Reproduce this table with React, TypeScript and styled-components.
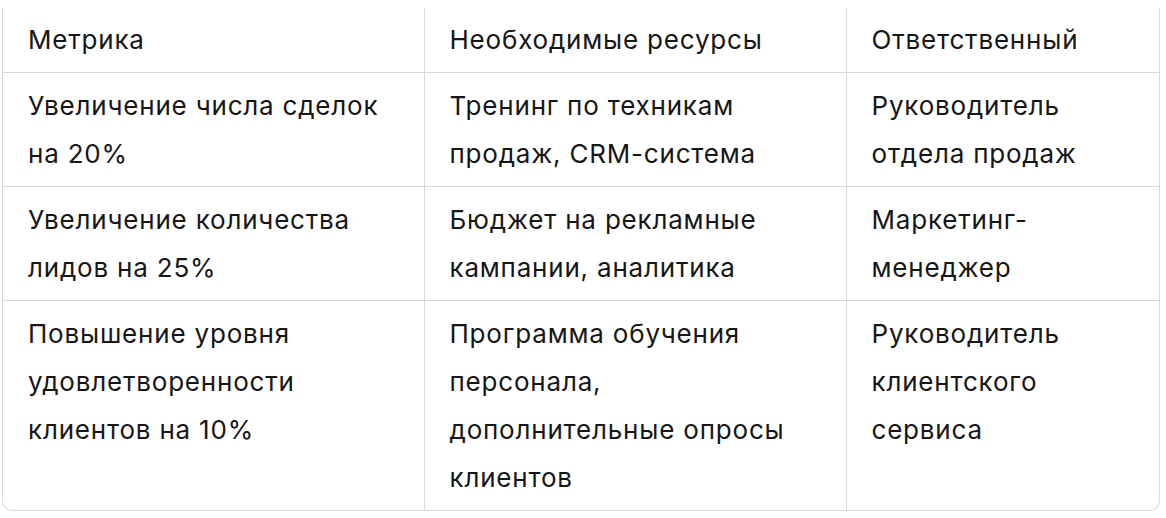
import styled, { createGlobalStyle } from "styled-components"

const GlobalStyle = createGlobalStyle`
  html, body {
    margin: 0;
    padding: 0;
    background: #ffffff;
  }
  body {
    font-family: Inter, "Noto Sans", sans-serif;
    color: #161616;
  }
`

type Row = { metric: string; resources: string; owner: string }

const rows: Row[] = [
    {
        metric: "Увеличение числа сделок на 20%",
        resources: "Тренинг по техникам продаж, CRM-система",
        owner: "Руководитель отдела продаж",
    },
    {
        metric: "Увеличение количества лидов на 25%",
        resources: "Бюджет на рекламные кампании, аналитика",
        owner: "Маркетинг-менеджер",
    },
    {
        metric: "Повышение уровня удовлетворенности клиентов на 10%",
        resources: "Программа обучения персонала, дополнительные опросы клиентов",
        owner: "Руководитель клиентского сервиса",
    },
]

const App = () => {
    return (
        <Page>
            <GlobalStyle />
            <Frame>
                <Table>
                    <colgroup>
                        <col style={{ width: 421 }} />
                        <col style={{ width: 422 }} />
                        <col />
                    </colgroup>
                    <thead>
                        <tr>
                            <HeadCell>Метрика</HeadCell>
                            <HeadCell>Необходимые ресурсы</HeadCell>
                            <HeadCell>Ответственный</HeadCell>
                        </tr>
                    </thead>
                    <tbody>
                        {rows.map((row) => (
                            <tr key={row.metric}>
                                <Cell>{row.metric}</Cell>
                                <Cell>{row.resources}</Cell>
                                <Cell>{row.owner}</Cell>
                            </tr>
                        ))}
                    </tbody>
                </Table>
            </Frame>
        </Page>
    )
}

const Page = styled.div`
    padding: 8px 0 0 2px;
    width: 1158px;
`

const Frame = styled.div`
    border: 1px solid #d8d8d8;
    border-top: none;
    border-radius: 0 0 10px 10px;
    overflow: hidden;
`

const Table = styled.table`
    width: 100%;
    table-layout: fixed;
    border-collapse: collapse;
    font-size: 26px;
    letter-spacing: 0.8px;
    line-height: 48px;
`

const HeadCell = styled.th`
    text-align: left;
    font-weight: 400;
    vertical-align: top;
    padding: 8px 25px 8px 25px;
    border-bottom: 1px solid #d8d8d8;
    border-left: 1px solid #d8d8d8;
    &:first-child {
        border-left: none;
    }
`

const Cell = styled.td`
    vertical-align: top;
    padding: 9px 25px 8px 25px;
    border-bottom: 1px solid #d8d8d8;
    border-left: 1px solid #d8d8d8;
    &:first-child {
        border-left: none;
    }
    tr:last-child & {
        border-bottom: none;
    }
`

export default App
